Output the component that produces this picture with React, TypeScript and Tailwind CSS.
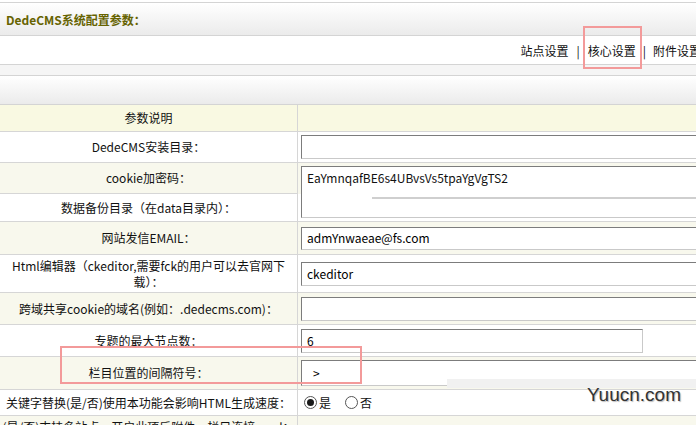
import React from 'react';

const font = "font-['SimSun','Noto_Sans_CJK_SC',sans-serif]";

const Box: React.FC<{ w?: string; h?: string; children?: React.ReactNode }> = ({ w = 'w-[420px]', h = 'h-[24px]', children }) => (
  <div
    className={`${w} ${h} shrink-0 bg-white border border-t-[#7c7c7c] border-l-[#7c7c7c] border-b-[#c9c9c9] border-r-[#c9c9c9] flex items-center px-[5px] text-[12px] text-black whitespace-nowrap`}
  >
    {children}
  </div>
);

interface RowProps {
  h: string;
  bg?: string;
  label: React.ReactNode;
  children?: React.ReactNode;
}

const Row: React.FC<RowProps> = ({ h, bg = 'bg-white', label, children }) => (
  <div className={`flex ${h} ${bg} border-b border-[#d6d6d6]`}>
    <div className="w-[298px] shrink-0 border-r border-[#d6d6d6] flex items-center justify-center text-center px-1 leading-[16px]">
      {label}
    </div>
    <div className="flex-1 flex items-center pl-[3px]">{children}</div>
  </div>
);

const Radio: React.FC<{ on?: boolean }> = ({ on }) => (
  <span className="w-[13px] h-[13px] rounded-full border border-[#555] bg-white flex items-center justify-center">
    {on && <span className="w-[7px] h-[7px] rounded-full bg-[#1a1a1a]" />}
  </span>
);

const App: React.FC = () => {
  const yellow = 'bg-[#f8f8ed]';
  return (
    <div className={`relative w-[696px] h-[425px] overflow-hidden bg-white text-[12px] text-[#111] ${font}`}>
      {/* top bands */}
      <div className="h-[2px] bg-white" />
      <div className="h-[34px] border-t border-b border-[#d4d4d4] bg-gradient-to-b from-white to-[#ebebeb] flex items-center pl-[6px] pt-[1px]">
        <span className="font-bold text-[#666300] text-[12px]">DedeCMS系统配置参数：</span>
      </div>
      <div className="h-[28px] bg-white flex items-center justify-end pt-[2px] whitespace-nowrap">
        <span>站点设置</span>
        <span className="mx-[8px]">|</span>
        <span>核心设置</span>
        <span className="mx-[7px]">|</span>
        <span className="mr-[-5px]">附件设置</span>
      </div>
      <div className="h-[12px] border-t border-b border-[#d4d4d4] bg-[#f5f5f5]" />
      <div className="h-[29px] border-b border-[#d4d4d4] bg-gradient-to-b from-white to-[#ebebeb]" />

      {/* table */}
      <Row h="h-[27px]" bg="bg-[#f9f9e2]" label="参数说明" />
      <Row h="h-[31px]" label="DedeCMS安装目录：">
        <Box />
      </Row>
      <div className="flex border-b border-[#d6d6d6]">
        <div className="w-[298px] shrink-0 border-r border-[#d6d6d6] flex flex-col">
          <div className={`h-[31px] ${yellow} border-b border-[#d6d6d6] flex items-center justify-center`}>cookie加密码：</div>
          <div className="h-[27px] bg-white flex items-center justify-center">数据备份目录（在data目录内）：</div>
        </div>
        <div className="flex-1 flex items-start pl-[3px] pt-[3px] bg-[linear-gradient(#f8f8ed_0,#f8f8ed_31px,#fff_31px)]">
          <div className="relative w-[420px] h-[52px] bg-white border border-t-[#7c7c7c] border-l-[#7c7c7c] border-b-[#c9c9c9] border-r-[#c9c9c9] px-[5px] pt-[4px] leading-[14px]">
            EaYmnqafBE6s4UBvsVs5tpaYgVgTS2
            <div className="absolute left-[70px] right-0 top-[30px] h-[2px] bg-[#cfcfcf]" />
          </div>
        </div>
      </div>
      <Row h="h-[33px]" bg={yellow} label="网站发信EMAIL：">
        <Box h="h-[23px]">admYnwaeae@fs.com</Box>
      </Row>
      <Row
        h="h-[38px]"
        label={
          <span>
            Html编辑器（ckeditor,需要fck的用户可以去官网下
            <br />
            载）：
          </span>
        }
      >
        <Box>ckeditor</Box>
      </Row>
      <Row h="h-[32px]" bg={yellow} label="跨域共享cookie的域名(例如：.dedecms.com)：">
        <Box />
      </Row>
      <Row h="h-[32px]" label="专题的最大节点数：">
        <Box w="w-[342px]">6</Box>
      </Row>
      <Row h="h-[33px]" bg={yellow} label="栏目位置的间隔符号：">
        <Box h="h-[26px]">
          <span className="pl-[6px]">&gt;</span>
        </Box>
      </Row>
      <Row h="h-[26px]" label="关键字替换(是/否)使用本功能会影响HTML生成速度：">
        <div className="flex items-center gap-[2px] pl-[3px]">
          <Radio on />
          <span className="mr-[12px]">是</span>
          <Radio />
          <span>否</span>
        </div>
      </Row>
      <div className={`flex h-[40px] ${yellow}`}>
        <div className="w-[298px] shrink-0 border-r border-[#d6d6d6] flex justify-center pt-[2px] whitespace-nowrap">
          (是/否)支持多站点，开启此项后附件、栏目连接、url：
        </div>
        <div className="flex-1" />
      </div>

      {/* watermark */}
      <div className="absolute left-[447px] top-[379px] w-[249px] h-[9px] bg-[#f1f1f1]" />
      <div className="absolute left-[587px] top-[385px] text-[19px] leading-[20px] text-[#333] font-['Liberation_Sans',sans-serif] [text-shadow:1px_1px_1px_#bbb]">
        Yuucn.com
      </div>

      {/* annotation boxes */}
      <div className="absolute left-[583px] top-[26px] w-[59px] h-[43px] border-2 border-[#f39a9a]" />
      <div className="absolute left-[60px] top-[346px] w-[302px] h-[38px] border-2 border-[#f39a9a]" />
    </div>
  );
};

export default App;
